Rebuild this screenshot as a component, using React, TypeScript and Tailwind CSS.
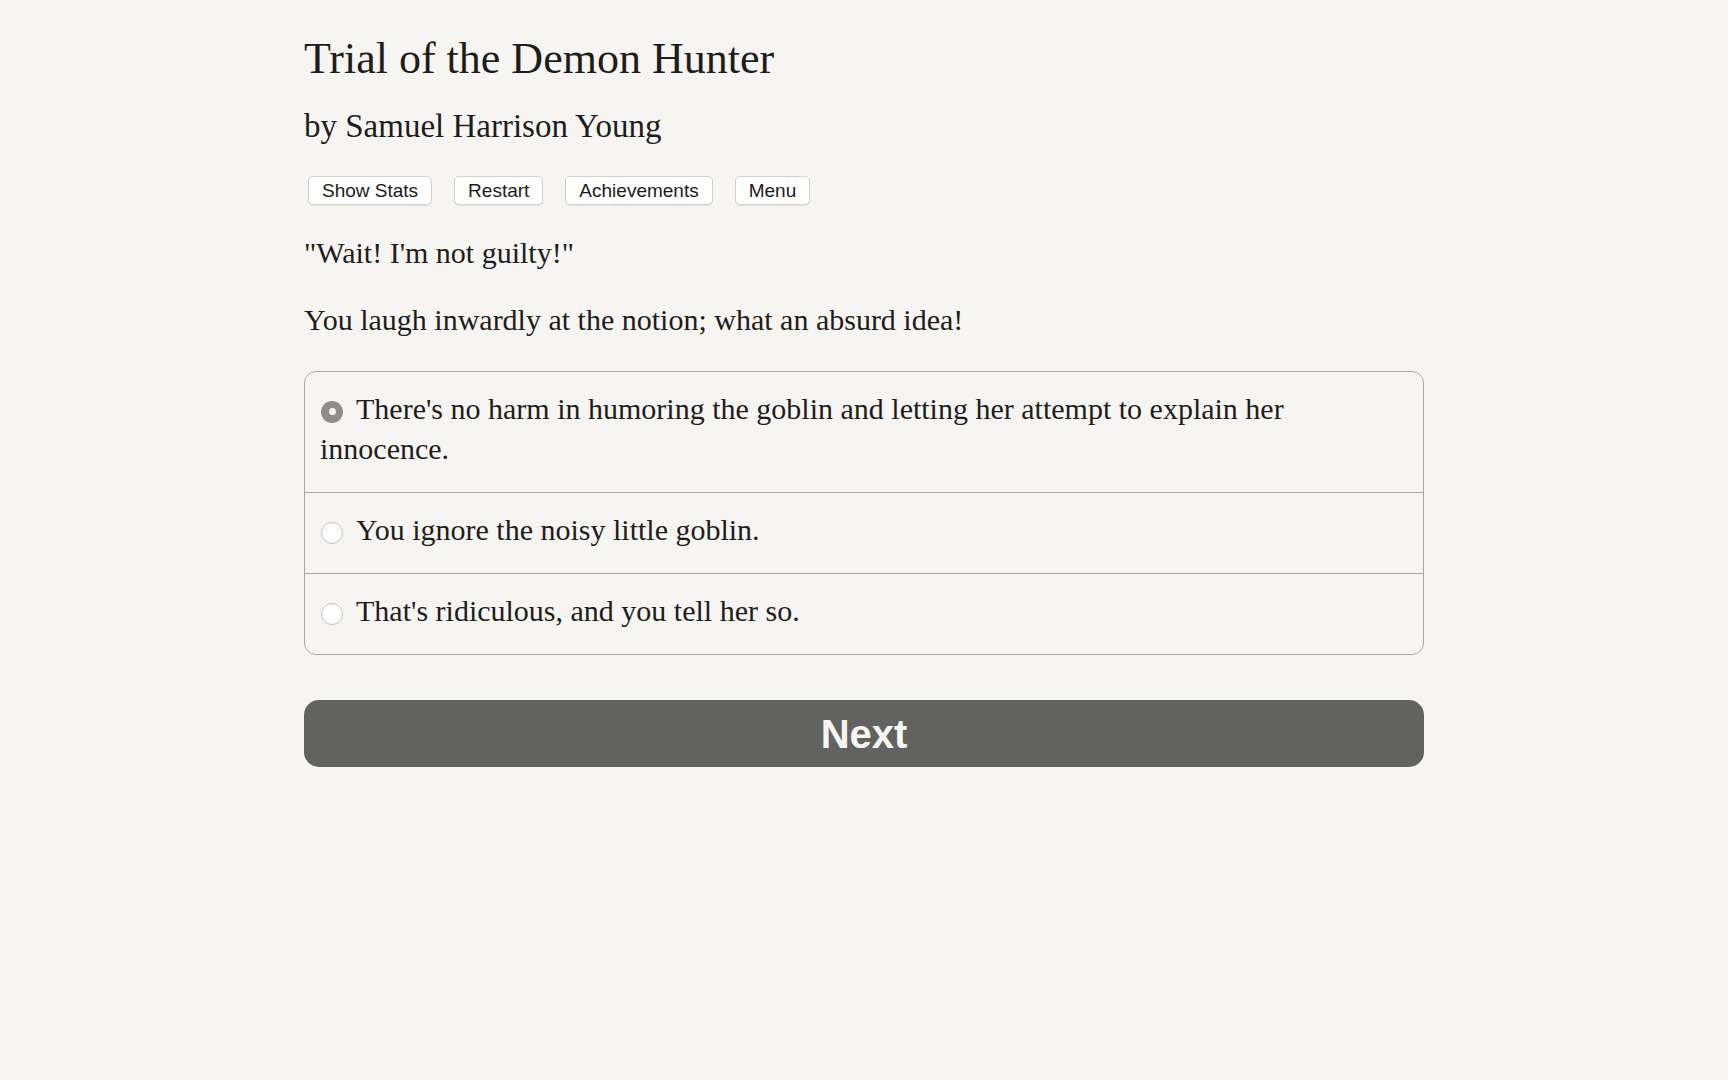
import React from "react";

const serif = { fontFamily: '"Liberation Serif", "Times New Roman", serif' };

function Radio({ checked }: { checked?: boolean }) {
  return checked ? (
    <span className="relative top-[-1px] ml-[1px] mr-[13px] inline-flex h-[22px] w-[22px] items-center justify-center rounded-full bg-[#8f8e8d] align-middle">
      <span className="h-[7px] w-[7px] rounded-full bg-[#f4f3f1]" />
    </span>
  ) : (
    <span className="relative top-[-1px] ml-[1px] mr-[13px] inline-block h-[22px] w-[22px] rounded-full border border-[#c4c2bf] bg-white align-middle" />
  );
}

export default function App() {
  const options = [
    {
      text: "There's no harm in humoring the goblin and letting her attempt to explain her innocence.",
      checked: true,
    },
    { text: "You ignore the noisy little goblin.", checked: false },
    { text: "That's ridiculous, and you tell her so.", checked: false },
  ];

  return (
    <div className="min-h-screen w-full bg-[#f7f5f1] text-[#1e1d1c]">
      <div className="mx-auto w-[1120px] pt-[33px]" style={serif}>
        <h1 className="text-[44px] leading-[1.2] font-normal">Trial of the Demon Hunter</h1>
        <h2 className="mt-[21px] text-[33px] leading-[1.2] font-normal">by Samuel Harrison Young</h2>

        <div
          className="mt-[30px] ml-[4px] flex gap-[22px]"
          style={{ fontFamily: '"Liberation Sans", Arial, sans-serif' }}
        >
          {["Show Stats", "Restart", "Achievements", "Menu"].map((b) => (
            <button
              key={b}
              className="flex h-[29px] items-center rounded-[5px] border border-[#d3d1ce] bg-white px-[13px] text-[19px] leading-none text-[#1a1a1a] shadow-[0_1px_1px_rgba(0,0,0,0.08)]"
            >
              {b}
            </button>
          ))}
        </div>

        <p className="mt-[28px] text-[30px] leading-[40px]">"Wait! I'm not guilty!"</p>
        <p className="mt-[27px] text-[30px] leading-[40px]">
          You laugh inwardly at the notion; what an absurd idea!
        </p>

        <div className="mt-[31px] overflow-hidden rounded-[12px] border border-[#aaa8a5]">
          {options.map((o, i) => (
            <div
              key={i}
              className={
                "pl-[15px] pr-[15px] pt-[17px] pb-[23px] text-[30px] leading-[40px] " +
                (i > 0 ? "border-t border-[#aaa8a5]" : "")
              }
            >
              <Radio checked={o.checked} />
              {o.text}
            </div>
          ))}
        </div>

        <button
          className="mt-[45px] flex h-[67px] w-full items-center justify-center rounded-[15px] bg-[#626261] text-[40px] font-bold text-[#f7f5f1]"
          style={{ fontFamily: '"Liberation Sans", Arial, sans-serif' }}
        >
          Next
        </button>
      </div>
    </div>
  );
}
